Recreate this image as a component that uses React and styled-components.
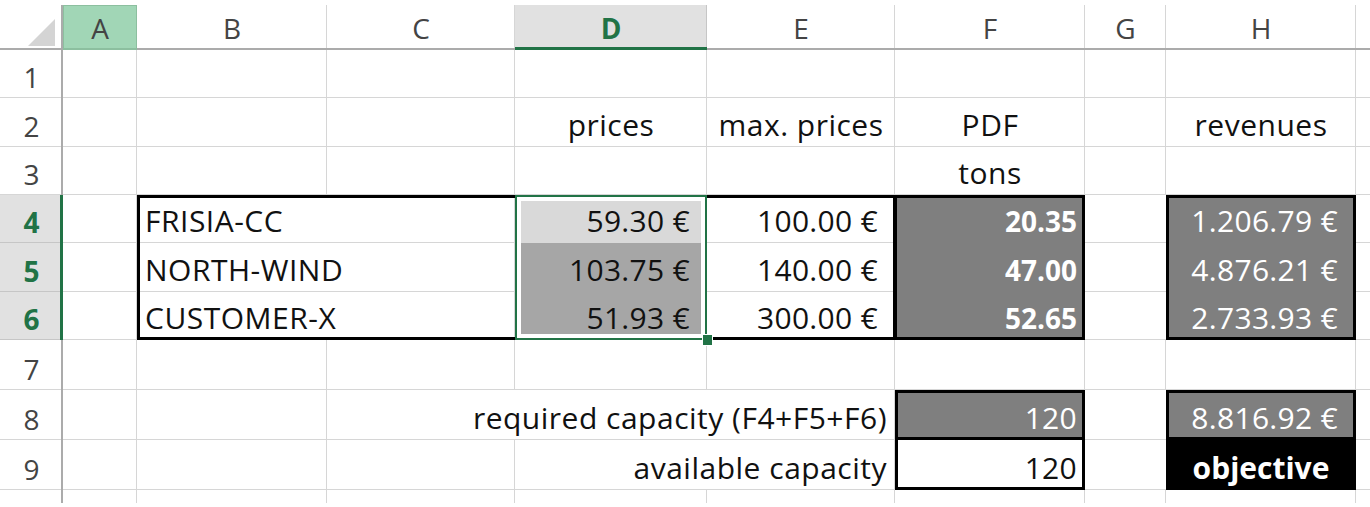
import React from "react";
import styled, { createGlobalStyle } from "styled-components";

const GREEN = "#217346";
const GRID = "#d6d6d6";
const GRAY_FILL = "#7f7f7f";

const Global = createGlobalStyle`
  html, body { margin: 0; padding: 0; background: #fff; }
  body { font-family: "Open Sans", "Lato", sans-serif; }
`;

const Page = styled.div`
  padding-top: 5px;
  width: 1370px;
  height: 507px;
  box-sizing: border-box;
  overflow: hidden;
  background: #fff;
`;

const Sheet = styled.div`
  display: grid;
  grid-template-columns: 63px 74px 190px 188px 192px 188px 190px 81px 190px 1fr;
  grid-template-rows: 45px 48px 49px 48px 48px 49px 48px 50px 50px 50px 13px;
  font-size: 27px;
  color: #111;
`;

const buildShadow = (p) => {
  const s = [];
  const e = p.$edges || {};
  const c = p.$edgeColor || "#000";
  if (e.t) s.push(`inset 0 ${e.t}px 0 ${c}`);
  if (e.b) s.push(`inset 0 -${e.b}px 0 ${c}`);
  if (e.l) s.push(`inset ${e.l}px 0 0 ${c}`);
  if (e.r) s.push(`inset -${e.r}px 0 0 ${c}`);
  if (p.$inner) {
    const i = p.$inner;
    if (e.t) s.push(`inset 0 ${e.t + i}px 0 #fff`);
    if (e.b) s.push(`inset 0 -${e.b + i}px 0 #fff`);
    if (e.l) s.push(`inset ${e.l + i}px 0 0 #fff`);
    if (e.r) s.push(`inset -${e.r + i}px 0 0 #fff`);
  }
  if (!p.$fill) {
    if (!p.$noR) s.push(`inset -1px 0 0 ${GRID}`);
    if (!p.$noB) s.push(`inset 0 -1px 0 ${GRID}`);
  }
  return s.length ? s.join(", ") : "none";
};

const Cell = styled.div`
  position: relative;
  display: flex;
  align-items: flex-end;
  justify-content: ${(p) =>
    p.$align === "right" ? "flex-end" : p.$align === "center" ? "center" : "flex-start"};
  grid-column: ${(p) => (p.$span ? `span ${p.$span}` : "auto")};
  padding: 0 ${(p) => p.$pr ?? 8}px 8px 8px;
  font-size: ${(p) => (p.$bold && !p.$wideBold ? 28 : 30)}px;
  letter-spacing: ${(p) => (p.$bold ? 0 : p.$num ? 0.3 : 0.5)}px;
  line-height: 28px;
  white-space: nowrap;
  background: ${(p) => p.$fill || "#fff"};
  color: ${(p) => p.$color || "#111"};
  font-weight: ${(p) => (p.$bold ? 700 : 400)};
  box-shadow: ${buildShadow};
`;

const Corner = styled.div`
  position: relative;
  background: #fff;
  box-shadow: inset -2px 0 0 #ababab, inset 0 -2px 0 #ababab;
  &::after {
    content: "";
    position: absolute;
    left: 28px;
    top: 14px;
    width: 0;
    height: 0;
    border-left: 27px solid transparent;
    border-bottom: 27px solid #d4d4d4;
  }
`;

const ColHead = styled.div`
  display: flex;
  align-items: center;
  justify-content: center;
  line-height: 28px;
  font-size: 28px;
  color: ${(p) => (p.$sel ? GREEN : "#444")};
  font-weight: ${(p) => (p.$sel ? 700 : 400)};
  background: ${(p) => (p.$active ? "#a1d6b6" : p.$sel ? "#e1e1e1" : "#fff")};
  box-shadow: ${(p) =>
    p.$sel
      ? `inset 0 -3px 0 ${GREEN}, inset -1px 0 0 #c6c6c6`
      : p.$active
      ? `inset 0 -2px 0 #8cbf9f, inset -1px 0 0 #8cbf9f, inset 1px 0 0 #8cbf9f, inset 0 1px 0 #8cbf9f`
      : `inset 0 -2px 0 #ababab, inset -1px 0 0 ${GRID}`};
`;

const RowHead = styled.div`
  display: flex;
  align-items: flex-end;
  justify-content: center;
  padding-bottom: 7px;
  line-height: 28px;
  font-size: 28px;
  color: ${(p) => (p.$sel ? GREEN : "#444")};
  font-weight: ${(p) => (p.$sel ? 700 : 400)};
  background: ${(p) => (p.$sel ? "#e1e1e1" : "#fff")};
  box-shadow: ${(p) =>
    p.$sel
      ? `inset -3px 0 0 ${GREEN}, inset 0 -1px 0 #c6c6c6`
      : p.$last
      ? `inset -2px 0 0 #ababab`
      : `inset -2px 0 0 #ababab, inset 0 -1px 0 ${GRID}`};
`;

const FillHandle = styled.span`
  position: absolute;
  right: -6px;
  bottom: -6px;
  width: 9px;
  height: 10px;
  background: ${GREEN};
  border: 1px solid #fff;
  z-index: 2;
`;

const cols = ["A", "B", "C", "D", "E", "F", "G", "H"];
const boxT = 3;

const rows = [
  { n: 1, cells: [{}, {}, {}, {}, {}, {}, {}, {}, {}] },
  {
    n: 2,
    cells: [
      {}, {}, {},
      { t: "prices", align: "center" },
      { t: "max. prices", align: "center" },
      { t: "PDF", align: "center" },
      {},
      { t: "revenues", align: "center" },
      {},
    ],
  },
  {
    n: 3,
    cells: [
      {}, {}, {}, {}, {},
      { t: "tons", align: "center" },
      {}, {}, {},
    ],
  },
];

const customers = [
  { name: "FRISIA-CC", price: "59.30 €", max: "100.00 €", tons: "20.35", rev: "1.206.79 €", dFill: "#d9d9d9" },
  { name: "NORTH-WIND", price: "103.75 €", max: "140.00 €", tons: "47.00", rev: "4.876.21 €", dFill: "#a6a6a6" },
  { name: "CUSTOMER-X", price: "51.93 €", max: "300.00 €", tons: "52.65", rev: "2.733.93 €", dFill: "#a6a6a6" },
];

export default function App() {
  return (
    <Page>
      <Global />
      <Sheet>
        <Corner />
        {cols.map((c) => (
          <ColHead key={c} $active={c === "A"} $sel={c === "D"}>
            {c}
          </ColHead>
        ))}
        <ColHead />

        {rows.map((r) => (
          <React.Fragment key={r.n}>
            <RowHead>{r.n}</RowHead>
            {r.cells.map((c, i) => (
              <Cell key={i} $align={c.align}>
                {c.t}
              </Cell>
            ))}
          </React.Fragment>
        ))}

        {customers.map((c, i) => {
          const first = i === 0;
          const last = i === customers.length - 1;
          return (
            <React.Fragment key={c.name}>
              <RowHead $sel>{4 + i}</RowHead>
              <Cell />
              <Cell
                $span={2}
                $edges={{ l: boxT, t: first ? boxT : 0, b: last ? boxT : 0 }}
              >
                {c.name}
              </Cell>
              <Cell
                $align="right"
                $num
                $pr={17}
                $fill={c.dFill}
                $edgeColor={GREEN}
                $inner={4}
                $edges={{ l: 2, r: 2, t: first ? 2 : 0, b: last ? 2 : 0 }}
              >
                {c.price}
                {last && <FillHandle />}
              </Cell>
              <Cell
                $align="right"
                $num
                $pr={17}
                $noR
                $edges={{ r: 2, t: first ? boxT : 0, b: last ? boxT : 0 }}
              >
                {c.max}
              </Cell>
              <Cell
                $align="right"
                $fill={GRAY_FILL}
                $color="#fff"
                $bold
                $edges={{ l: 2, r: boxT, t: first ? boxT : 0, b: last ? boxT : 0 }}
              >
                {c.tons}
              </Cell>
              <Cell $noR />
              <Cell
                $align="right"
                $num
                $pr={18}
                $fill={GRAY_FILL}
                $color="#fff"
                $edges={{ l: boxT, r: boxT, t: first ? boxT : 0, b: last ? boxT : 0 }}
              >
                {c.rev}
              </Cell>
              <Cell />
            </React.Fragment>
          );
        })}

        <RowHead>7</RowHead>
        {Array.from({ length: 9 }).map((_, i) => (
          <Cell key={i} />
        ))}

        <RowHead>8</RowHead>
        <Cell />
        <Cell />
        <Cell $span={3} $align="right">
          required capacity (F4+F5+F6)
        </Cell>
        <Cell
          $align="right"
          $num
          $fill={GRAY_FILL}
          $color="#fff"
          $edges={{ l: boxT, r: boxT, t: boxT, b: boxT }}
        >
          120
        </Cell>
        <Cell $noR />
        <Cell
          $align="right"
          $num
          $pr={18}
          $fill={GRAY_FILL}
          $color="#fff"
          $edges={{ l: boxT, r: boxT, t: boxT, b: boxT }}
        >
          8.816.92 €
        </Cell>
        <Cell />

        <RowHead>9</RowHead>
        <Cell />
        <Cell />
        <Cell />
        <Cell $span={2} $align="right">
          available capacity
        </Cell>
        <Cell $align="right" $num $noR $edges={{ l: boxT, r: boxT, b: boxT }}>
          120
        </Cell>
        <Cell $noR />
        <Cell $align="center" $fill="#000" $color="#fff" $bold $wideBold>
          objective
        </Cell>
        <Cell />

        <RowHead $last />
        {Array.from({ length: 9 }).map((_, i) => (
          <Cell key={i} $noB />
        ))}
      </Sheet>
    </Page>
  );
}
